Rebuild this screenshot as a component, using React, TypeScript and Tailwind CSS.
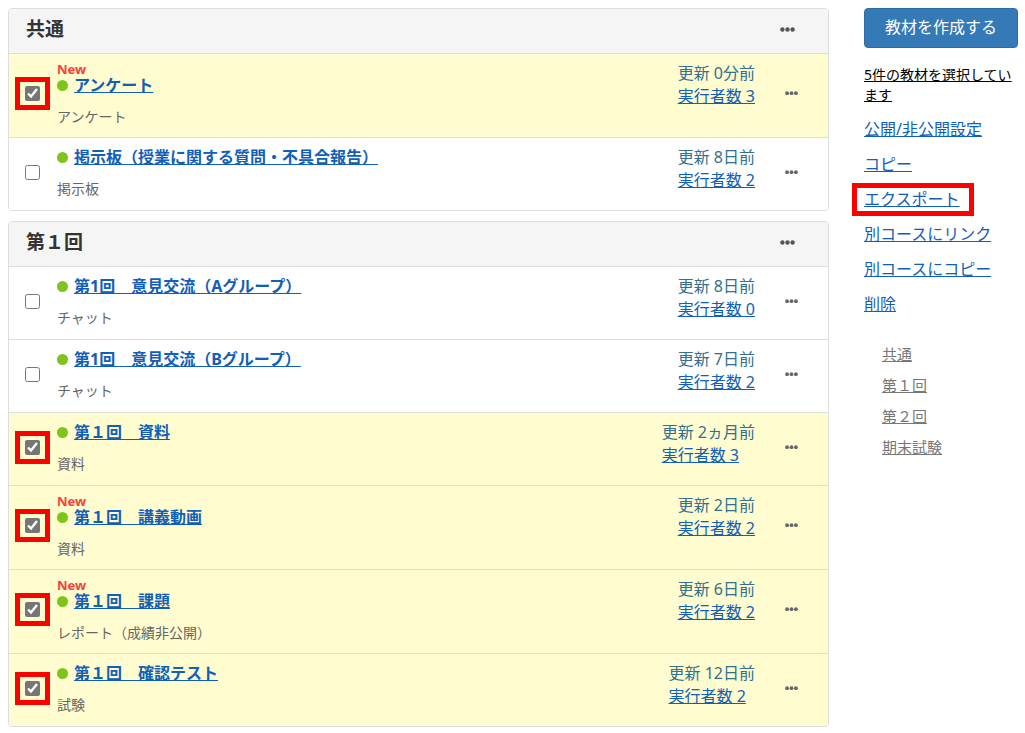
import { clsx } from "clsx";
import { useState } from "react";

type Material = {
	id: string;
	title: string;
	kind: string;
	updated: string;
	users: number;
	isNew?: boolean;
};

type Section = {
	id: string;
	title: string;
	items: Material[];
};

const sections: Section[] = [
	{
		id: "common",
		title: "共通",
		items: [
			{
				id: "survey",
				title: "アンケート",
				kind: "アンケート",
				updated: "0分前",
				users: 3,
				isNew: true,
			},
			{
				id: "board",
				title: "掲示板（授業に関する質問・不具合報告）",
				kind: "掲示板",
				updated: "8日前",
				users: 2,
			},
		],
	},
	{
		id: "first",
		title: "第１回",
		items: [
			{
				id: "chat-a",
				title: "第1回　意見交流（Aグループ）",
				kind: "チャット",
				updated: "8日前",
				users: 0,
			},
			{
				id: "chat-b",
				title: "第1回　意見交流（Bグループ）",
				kind: "チャット",
				updated: "7日前",
				users: 2,
			},
			{
				id: "document",
				title: "第１回　資料",
				kind: "資料",
				updated: "2ヵ月前",
				users: 3,
			},
			{
				id: "video",
				title: "第１回　講義動画",
				kind: "資料",
				updated: "2日前",
				users: 2,
				isNew: true,
			},
			{
				id: "report",
				title: "第１回　課題",
				kind: "レポート（成績非公開）",
				updated: "6日前",
				users: 2,
				isNew: true,
			},
			{
				id: "test",
				title: "第１回　確認テスト",
				kind: "試験",
				updated: "12日前",
				users: 2,
			},
		],
	},
];

const actions = [
	{ label: "公開/非公開設定" },
	{ label: "コピー" },
	{ label: "エクスポート", marked: true },
	{ label: "別コースにリンク" },
	{ label: "別コースにコピー" },
	{ label: "削除" },
];

const anchors = ["共通", "第１回", "第２回", "期末試験"];

const Dots = ({ className }: { className: string }) => (
	<svg viewBox="0 0 15 5" className={className} fill="currentColor" aria-hidden>
		<circle cx="2.4" cy="2.5" r="2.2" />
		<circle cx="7.5" cy="2.5" r="2.2" />
		<circle cx="12.6" cy="2.5" r="2.2" />
	</svg>
);

const MaterialRow = ({
	item,
	checked,
	onToggle,
}: {
	item: Material;
	checked: boolean;
	onToggle: () => void;
}) => (
	<li
		className={clsx(
			"flex min-h-[73px] border-t border-[#dddddd]",
			checked ? "bg-[#fffccf]" : "bg-white",
		)}
	>
		<div className="flex w-12 shrink-0 items-center pb-1 pl-4">
			<span className="relative flex">
				<input
					id={item.id}
					type="checkbox"
					checked={checked}
					onChange={onToggle}
					aria-label={item.title}
					className="size-[15px] accent-[#767676]"
				/>
				{checked && (
					<span className="pointer-events-none absolute -inset-x-2.5 -inset-y-[9px] border-5 border-[#ff0000]" />
				)}
			</span>
		</div>
		<div className="min-w-0 flex-1 pt-[9px] pb-2.5">
			{item.isNew && (
				<p className="text-[13px] leading-3 font-bold text-[#f8403a]">New</p>
			)}
			<div className="flex items-center gap-1.5 leading-5">
				<span className="size-[11px] shrink-0 rounded-full bg-[#7fc31c]" />
				<a href="#" className="font-bold text-[#1160b7] underline">
					{item.title}
				</a>
			</div>
			<p className="mt-3 text-sm leading-5 text-[#666666]">{item.kind}</p>
		</div>
		<div className="shrink-0 pt-2 leading-[23px]">
			<p className="text-[#31708f]">{`更新 ${item.updated}`}</p>
			<a href="#" className="text-[#1160b7] underline">
				{`実行者数 ${item.users}`}
			</a>
		</div>
		<div className="flex w-[73px] shrink-0 items-center pb-1 pl-[30px]">
			<button type="button" aria-label="メニュー" className="text-[#666666]">
				<Dots className="w-[13px]" />
			</button>
		</div>
	</li>
);

export default function App() {
	const [selected, setSelected] = useState([
		"survey",
		"document",
		"video",
		"report",
		"test",
	]);

	const toggle = (id: string) =>
		setSelected((prev) =>
			prev.includes(id) ? prev.filter((s) => s !== id) : [...prev, id],
		);

	return (
		<div className="flex items-start gap-[35px] bg-white pt-2 pr-[7px] pb-[7px] pl-2 font-['Noto_Sans','Noto_Sans_CJK_JP',sans-serif] text-base">
			<main className="flex min-w-0 flex-1 flex-col gap-2.5">
				{sections.map((section) => (
					<section
						key={section.id}
						className="overflow-hidden rounded border border-[#dddddd]"
					>
						<header className="flex h-11 items-center justify-between bg-[#f5f5f5] pr-[33px] pb-1 pl-[17px]">
							<h2 className="text-[19px] leading-6 font-bold text-[#333333]">
								{section.title}
							</h2>
							<button
								type="button"
								aria-label="メニュー"
								className="text-[#555555]"
							>
								<Dots className="w-[15px]" />
							</button>
						</header>
						<ul>
							{section.items.map((item) => (
								<MaterialRow
									key={item.id}
									item={item}
									checked={selected.includes(item.id)}
									onToggle={() => toggle(item.id)}
								/>
							))}
						</ul>
					</section>
				))}
			</main>
			<aside className="w-[154px] shrink-0">
				<button
					type="button"
					className="h-10 w-full rounded border border-[#2e6da4] bg-[#337ab7] pb-0.5 text-white"
				>
					教材を作成する
				</button>
				<p className="mt-[17px] text-sm leading-5 text-black underline">
					{`${selected.length}件の教材を選択しています`}
				</p>
				<ul className="mt-3 flex flex-col gap-[11px] leading-6">
					{actions.map((action) => (
						<li key={action.label}>
							<a
								href="#"
								className="relative inline-block text-[#1160b7] underline"
							>
								{action.label}
								{action.marked && (
									<span className="pointer-events-none absolute -top-1 -right-3.5 -bottom-[5px] -left-3 border-5 border-[#ff0000]" />
								)}
							</a>
						</li>
					))}
				</ul>
				<ul className="mt-[26px] flex flex-col gap-[7px] pl-[18px] text-[15px] leading-6">
					{anchors.map((label) => (
						<li key={label}>
							<a href="#" className="text-[#777777] underline">
								{label}
							</a>
						</li>
					))}
				</ul>
			</aside>
		</div>
	);
}
